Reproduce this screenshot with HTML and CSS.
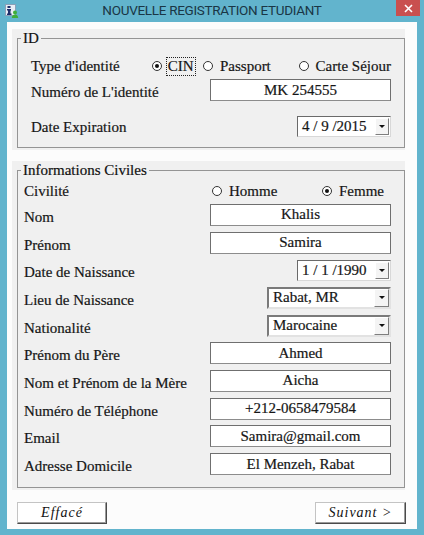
FILE: index.html
```html
<!DOCTYPE html>
<html lang="fr">
<head>
<meta charset="utf-8">
<title>Nouvelle registration etudiant</title>
<link rel="stylesheet" href="styles.css">
</head>
<body>
<div class="window">
  <div class="titlebar">
    <span class="app-icon">
      <svg width="14" height="14" viewBox="0 0 14 14">
        <rect x="0.5" y="0.5" width="10" height="11" fill="#e9eef5" stroke="#8aa0b8"/>
        <rect x="2.5" y="2" width="3" height="2" fill="#1f2f6b"/>
        <rect x="2" y="5" width="4" height="1.5" fill="#1f2f6b"/>
        <rect x="3" y="5" width="2.5" height="5" fill="#1f2f6b"/>
        <rect x="2" y="9.5" width="4.5" height="1.5" fill="#1f2f6b"/>
        <circle cx="10" cy="8.5" r="2" fill="#3fae3a"/>
        <path d="M6.8 14 C7 11.5 8.5 10.6 10 10.6 C11.5 10.6 13 11.5 13.2 14 Z" fill="#3fae3a"/>
      </svg>
    </span>
    <span class="title">NOUVELLE REGISTRATION ETUDIANT</span>
    <span class="close">
      <svg width="9" height="9" viewBox="0 0 9 9"><path d="M1 1 L8 8 M8 1 L1 8" stroke="#fff" stroke-width="1.6"/></svg>
    </span>
  </div>

  <div class="client">
    <div class="panel g1">
      <fieldset class="group">
        <legend>ID</legend>
        <div class="row r1 radio-row">
          <span class="label lab-type">Type d'identité</span>
          <span class="opt opt-cin"><span class="radio checked"></span><span class="focus">CIN</span></span>
          <span class="opt opt-pass"><span class="radio"></span><span>Passport</span></span>
          <span class="opt"><span class="radio"></span><span>Carte Séjour</span></span>
        </div>
        <div class="row r2">
          <span class="label">Numéro de L'identité</span>
          <span class="field">MK 254555</span>
        </div>
        <div class="row r3">
          <span class="label">Date Expiration</span>
          <span class="date"><span class="date-text">4 / 9 /2015</span><span class="drop small"><span class="arrow"></span></span></span>
        </div>
      </fieldset>
    </div>

    <div class="panel g2">
      <fieldset class="group">
        <legend>Informations Civiles</legend>
        <div class="row first radio-row">
          <span class="label lab-civ">Civilité</span>
          <span class="opt opt-homme"><span class="radio"></span><span>Homme</span></span>
          <span class="opt"><span class="radio checked"></span><span>Femme</span></span>
        </div>
        <div class="row">
          <span class="label">Nom</span>
          <span class="field">Khalis</span>
        </div>
        <div class="row">
          <span class="label">Prénom</span>
          <span class="field">Samira</span>
        </div>
        <div class="row">
          <span class="label">Date de Naissance</span>
          <span class="date"><span class="date-text">1 / 1 /1990</span><span class="drop small"><span class="arrow"></span></span></span>
        </div>
        <div class="row">
          <span class="label">Lieu de Naissance</span>
          <span class="combo"><span class="combo-text">Rabat, MR</span><span class="drop"><span class="arrow"></span></span></span>
        </div>
        <div class="row">
          <span class="label">Nationalité</span>
          <span class="combo"><span class="combo-text">Marocaine</span><span class="drop"><span class="arrow"></span></span></span>
        </div>
        <div class="row">
          <span class="label">Prénom du Père</span>
          <span class="field">Ahmed</span>
        </div>
        <div class="row">
          <span class="label">Nom et Prénom de la Mère</span>
          <span class="field">Aicha</span>
        </div>
        <div class="row">
          <span class="label">Numéro de Téléphone</span>
          <span class="field">+212-0658479584</span>
        </div>
        <div class="row">
          <span class="label">Email</span>
          <span class="field">Samira@gmail.com</span>
        </div>
        <div class="row">
          <span class="label">Adresse Domicile</span>
          <span class="field">El Menzeh, Rabat</span>
        </div>
      </fieldset>
    </div>

    <div class="actions">
      <button class="btn btn-clear">Effacé</button>
      <button class="btn btn-next">Suivant &gt;</button>
    </div>
  </div>
</div>
</body>
</html>
```

FILE: styles.css
```css
* { box-sizing: border-box; }

body {
  margin: 0;
  width: 424px;
  height: 535px;
  overflow: hidden;
  background: #62b4cd;
  font-family: "Liberation Serif", "DejaVu Serif", serif;
  color: #161616;
}

.window {
  width: 424px;
  height: 535px;
  display: flex;
  flex-direction: column;
}

.titlebar {
  height: 22px;
  display: grid;
  grid-template-columns: 1fr auto 1fr;
  align-items: start;
}

.app-icon {
  display: flex;
  padding: 4px 0 0 5px;
}

.title {
  font-family: Roboto, "Liberation Sans", sans-serif;
  font-size: 13.5px;
  line-height: 21px;
  color: #1a3645;
  letter-spacing: -0.3px;
}

.close {
  justify-self: end;
  width: 24px;
  height: 16px;
  margin-right: 4px;
  background: #c9504f;
  display: flex;
  align-items: center;
  justify-content: center;
}

.client {
  margin: 0 7px;
  height: 507px;
  background: #fcfcfc;
  padding-top: 7px;
}

.panel {
  margin-left: 5px;
  width: 393px;
  background: #f0f0f0;
  padding: 1px 0 2px 5px;
}

.panel + .panel { margin-top: 11px; }

.group {
  margin: 0;
  min-width: 0;
  border: 1px solid #949494;
  padding: 0 13px 9px 3px;
}

.group legend {
  padding: 0 2px;
  font-size: 15px;
  line-height: 16px;
  color: #111;
  -webkit-text-stroke: 0.2px #111;
}

.row {
  display: flex;
  align-items: center;
  justify-content: space-between;
}

.label {
  font-size: 15px;
  padding-top: 5px;
  white-space: nowrap;
  -webkit-text-stroke: 0.2px #161616;
}

.g1 .row { padding-left: 10px; }
.g1 .r1 { margin-top: 9px; height: 22px; }
.g1 .r2 { margin-top: 1px; height: 24px; }
.g1 .r3 { margin-top: 12px; height: 24px; }
.g1 .r3 .label { padding-top: 2px; }

.g2 .row { padding-left: 3px; height: 27.7px; }
.g2 .row.first { height: 23px; padding-top: 3px; }

.radio-row { justify-content: flex-start; }
.radio-row .label { padding-top: 0; }
.lab-type { width: 125px; }
.lab-civ { width: 188px; }

.opt {
  display: flex;
  align-items: center;
  gap: 7px;
  font-size: 15px;
  white-space: nowrap;
  -webkit-text-stroke: 0.2px #161616;
}
.opt-cin { width: 53px; gap: 5px; }
.opt-pass { width: 99px; }
.opt-homme { width: 110px; }

.radio {
  width: 10px;
  height: 10px;
  border: 1px solid #333;
  border-radius: 50%;
  background: #fff;
  display: flex;
  align-items: center;
  justify-content: center;
  -webkit-text-stroke: 0;
}
.radio.checked::after {
  content: "";
  width: 4px;
  height: 4px;
  border-radius: 50%;
  background: #111;
}

.focus {
  outline: 1px dotted #222;
  padding: 0 1px;
  line-height: 17px;
}

.field {
  width: 181px;
  height: 22px;
  background: #fff;
  border: 1px solid #6f6f6f;
  border-bottom-color: #8c8c8c;
  display: flex;
  align-items: center;
  justify-content: center;
  font-size: 15px;
  white-space: nowrap;
  -webkit-text-stroke: 0.2px #161616;
}

.date {
  width: 94px;
  height: 21px;
  background: #fff;
  border: 1px solid;
  border-color: #6a6a6a #d8d8d8 #d8d8d8 #6a6a6a;
  display: flex;
  align-items: center;
  justify-content: space-between;
  padding: 0 1px 0 4px;
  font-size: 15px;
  -webkit-text-stroke: 0.2px #161616;
}

.date-text { white-space: pre; }

.combo {
  width: 124px;
  height: 22px;
  background: #fff;
  border: 2px solid;
  border-color: #7a7a7a #e2e2e2 #e2e2e2 #7a7a7a;
  display: flex;
  align-items: stretch;
  justify-content: space-between;
  padding-left: 4px;
  font-size: 15px;
  -webkit-text-stroke: 0.2px #161616;
}

.combo-text { display: flex; align-items: center; }

.drop {
  width: 15px;
  background: #f4f4f4;
  border: 1px solid;
  border-color: #fff #7e7e7e #7e7e7e #fff;
  display: flex;
  align-items: center;
  justify-content: center;
}
.drop.small {
  width: 14px;
  height: 17px;
}

.arrow {
  width: 0;
  height: 0;
  border-left: 3px solid transparent;
  border-right: 3px solid transparent;
  border-top: 3px solid #111;
}

.actions {
  display: flex;
  justify-content: space-between;
  padding: 12px 11px 0 10px;
}

.btn {
  height: 22px;
  margin: 0;
  padding: 0;
  background: #fff;
  border: 1px solid;
  border-color: #c4c4c4 #4a4a4a #4a4a4a #c4c4c4;
  box-shadow: inset -1px -1px 0 #9a9a9a;
  font-family: "Liberation Serif", serif;
  font-style: italic;
  font-size: 14px;
  letter-spacing: 1px;
  color: #111;
}
.btn-clear { width: 90px; }
.btn-next { width: 91px; }
```
